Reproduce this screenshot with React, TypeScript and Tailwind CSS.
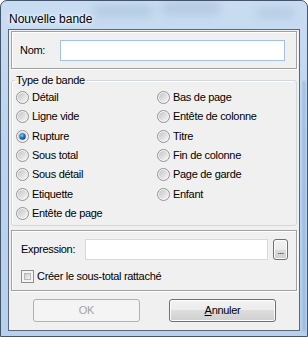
import React from "react";

const base = "font-['Liberation_Sans',Arial,sans-serif] text-[11px] leading-[13px] tracking-[-0.3px]";
const txt = `${base} text-black`;

function Radio({ checked }: { checked?: boolean }) {
  return (
    <svg width="13" height="13" viewBox="0 0 13 13" className="shrink-0">
      <defs>
        <linearGradient id="rIn" x1="0" y1="0" x2="1" y2="1">
          <stop offset="0" stopColor="#c4c4c4" />
          <stop offset="1" stopColor="#f6f6f6" />
        </linearGradient>
        <radialGradient id="rDot" cx="0.4" cy="0.35" r="0.7">
          <stop offset="0" stopColor="#8fd0ff" />
          <stop offset="0.45" stopColor="#2a7fc8" />
          <stop offset="1" stopColor="#0d3a6c" />
        </radialGradient>
      </defs>
      <circle cx="6.5" cy="6.5" r="6" fill="#f4f4f4" stroke="#8f9296" strokeWidth="1" />
      <circle cx="6.5" cy="6.5" r="4.6" fill="url(#rIn)" />
      {checked && <circle cx="6.5" cy="6.5" r="3.2" fill="url(#rDot)" />}
    </svg>
  );
}

function RadioItem({ label, checked }: { label: string; checked?: boolean }) {
  return (
    <div className="flex items-center gap-[3px]">
      <Radio checked={checked} />
      <span className={txt}>{label}</span>
    </div>
  );
}

export default function App() {
  const left = ["Détail", "Ligne vide", "Rupture", "Sous total", "Sous détail", "Etiquette", "Entête de page"];
  const right = ["Bas de page", "Entête de colonne", "Titre", "Fin de colonne", "Page de garde", "Enfant"];
  const rows = left.map((l, i) => [l, right[i]] as const);

  return (
    <div className="relative flex h-[337px] w-[308px] flex-col overflow-hidden rounded-t-[7px] border border-[#44546a] bg-[linear-gradient(to_bottom,#c9ddf2_0%,#bcd4ee_40%,#b7d0ec_100%)]">
      {/* blurred desktop behind glass */}
      <div className="pointer-events-none absolute left-[92px] top-[4px] h-[12px] w-[60px] rounded-full bg-[#9ab0ca] opacity-40 blur-[5px]" />
      <div className="pointer-events-none absolute left-[160px] top-[0px] h-[14px] w-[60px] rounded-full bg-[#9ab0ca] opacity-40 blur-[5px]" />
      <div className="pointer-events-none absolute left-[255px] top-[7px] h-[10px] w-[40px] rounded-full bg-[#9eb4cc] opacity-40 blur-[5px]" />
      <div className="pointer-events-none absolute right-[2px] top-[80px] h-[250px] w-[2px] bg-[#6f9ad0] opacity-60 blur-[1px]" />

      {/* title bar */}
      <div className="relative h-[28px] shrink-0 pl-[8px] pt-[4px]">
        <span className="font-['Liberation_Sans',Arial,sans-serif] text-[12px] leading-[15px] text-black [text-shadow:0_0_6px_#ffffff,0_0_3px_#ffffff]">
          Nouvelle bande
        </span>
      </div>

      {/* client */}
      <div className="relative mx-[7px] mb-[5px] flex flex-1 flex-col border border-[#5b6878] bg-[#f0f0f0]">
        {/* Nom box */}
        <div className="mx-[2px] mt-[1px] flex h-[38px] items-center border border-[#a0a0a0] pl-[8px] shadow-[inset_1px_1px_0_#ffffff,1px_1px_0_#ffffff]">
          <span className={`${txt} w-[40px]`}>Nom:</span>
          <div className="h-[21px] w-[225px] border border-[#a3c3e4] bg-white" />
        </div>

        {/* Type de bande */}
        <fieldset className="mx-[2px] mt-[5px] rounded-[3px] border border-[#d0d7dd] px-[3px] pb-[2px] shadow-[inset_1px_1px_0_#ffffff]">
          <legend className={`${txt} px-[1px]`}>Type de bande</legend>
          <div className="ml-[1px] grid auto-rows-[19.3px] grid-cols-[141px_1fr] pt-[1px]">
            {rows.map(([l, r]) => (
              <React.Fragment key={l}>
                <RadioItem label={l} checked={l === "Rupture"} />
                {r ? <RadioItem label={r} /> : <div />}
              </React.Fragment>
            ))}
          </div>
        </fieldset>

        {/* Expression box */}
        <div className="mx-[2px] mt-[4px] flex h-[61px] flex-col border border-[#a0a0a0] pl-[9px] pt-[8px] shadow-[inset_1px_1px_0_#ffffff,1px_1px_0_#ffffff]">
          <div className="flex h-[21px] items-center">
            <span className={`${txt} w-[64px]`}>Expression:</span>
            <div className="h-[21px] w-[183px] border border-[#d5dae0] bg-white" />
            <div className="ml-[5px] flex h-[21px] w-[15px] items-end justify-center rounded-[3px] border border-[#707070] bg-[linear-gradient(to_bottom,#f2f2f2_0%,#ebebeb_50%,#dddddd_50%,#cfcfcf_100%)] pb-[3px] shadow-[inset_0_0_0_1px_#fcfcfc]">
              <span className="font-['Liberation_Sans',Arial,sans-serif] text-[9px] leading-[9px] tracking-[-0.5px] text-black">...</span>
            </div>
          </div>
          <div className="mt-[10px] flex items-center gap-[3px]">
            <div className="h-[13px] w-[13px] shrink-0 border border-[#8e8f8f] bg-[#f4f4f4] p-[2px]">
              <div className="h-full w-full border border-[#b8b8b8] bg-[linear-gradient(135deg,#cbcbcb,#f6f6f6)]" />
            </div>
            <span className={txt}>Créer le sous-total rattaché</span>
          </div>
        </div>

        {/* buttons */}
        <div className="mt-[8px] flex gap-[29px] pl-[24px]">
          <div className="flex h-[23px] w-[107px] items-center justify-center rounded-[3px] border border-[#adb2b5] bg-[#f4f4f4]">
            <span className={`${base} text-[#a3a3a3]`}>OK</span>
          </div>
          <div className="flex h-[23px] w-[107px] items-center justify-center rounded-[3px] border border-[#707070] bg-[linear-gradient(to_bottom,#f2f2f2_0%,#ebebeb_50%,#dddddd_50%,#cfcfcf_100%)] shadow-[inset_0_0_0_1px_#fcfcfc]">
            <span className={txt}>
              <span className="underline underline-offset-[1px]">A</span>nnuler
            </span>
          </div>
        </div>
      </div>
    </div>
  );
}
